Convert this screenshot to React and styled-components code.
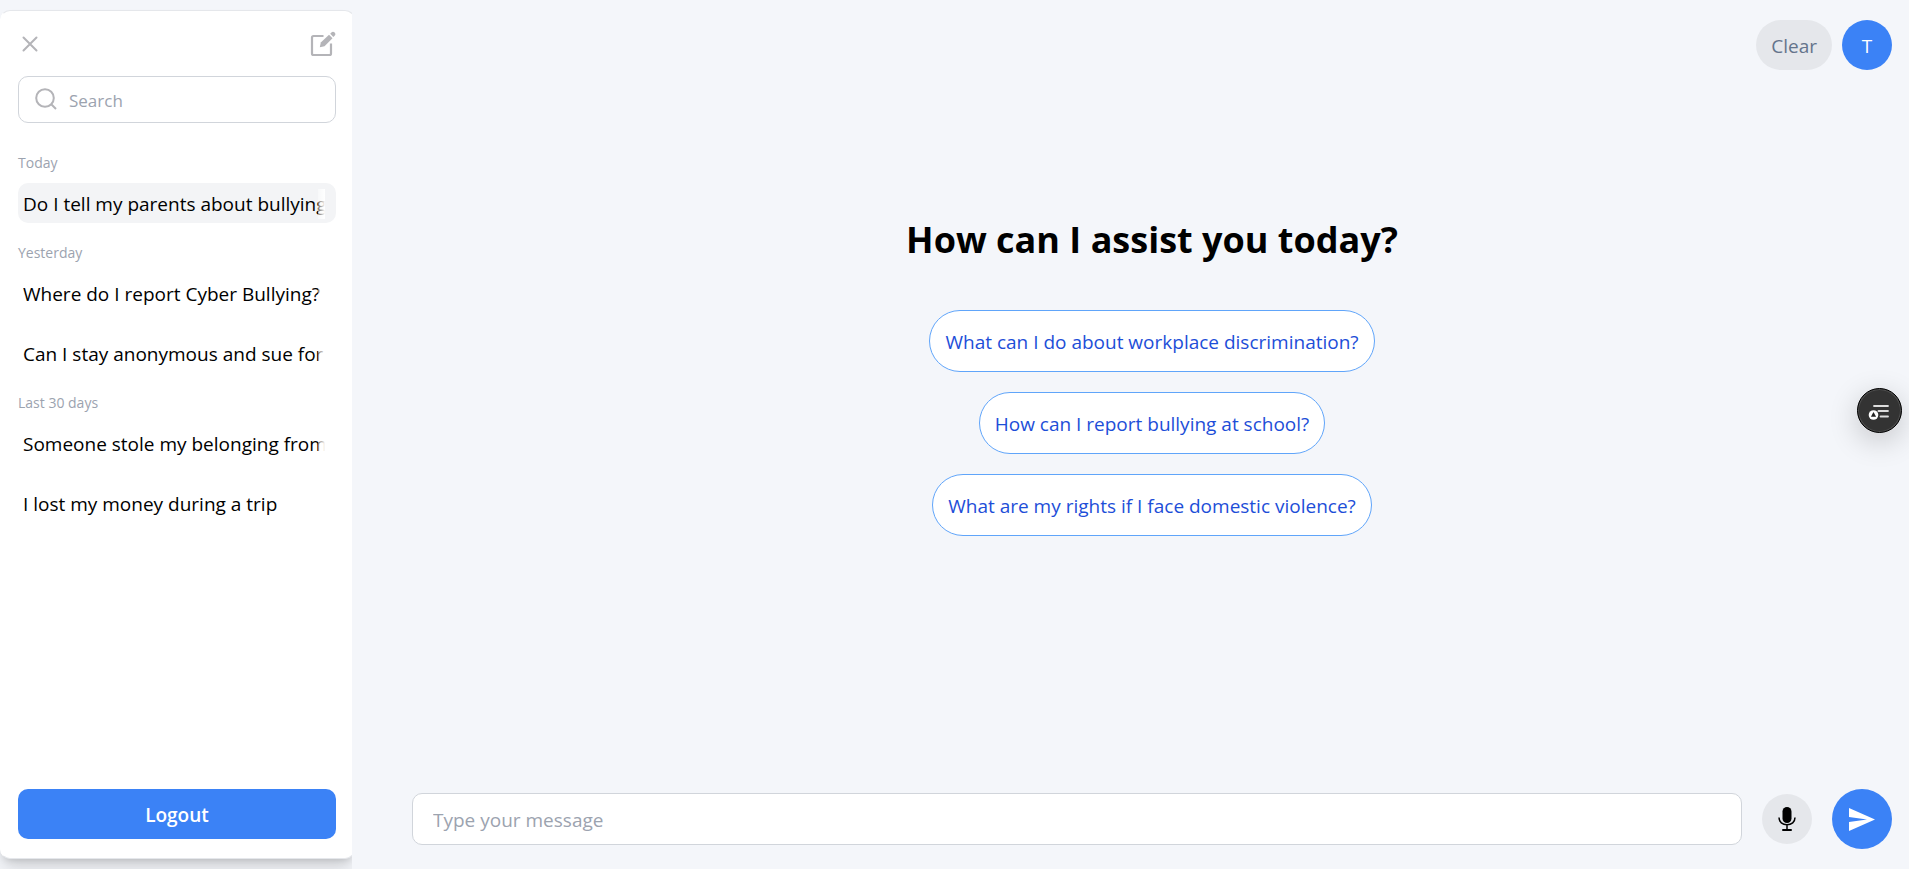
import React from "react";
import styled, { createGlobalStyle } from "styled-components";

const GlobalStyle = createGlobalStyle`
  *, *::before, *::after {
    box-sizing: border-box;
  }
  body {
    margin: 0;
    background-color: #f4f6fa;
    color: #000;
    font-family: "Open Sans", "Noto Sans", sans-serif;
    font-size: 19px;
    line-height: 30px;
  }
  button, input {
    font-family: inherit;
    font-size: inherit;
    line-height: inherit;
    color: inherit;
    margin: 0;
  }
  button {
    padding: 0;
    border: none;
    background: none;
    cursor: pointer;
    white-space: nowrap;
  }
  h1, h2, ul {
    margin: 0;
    padding: 0;
    list-style: none;
  }
`;

const Layout = styled.div`
  display: flex;
  height: 100vh;
  overflow: hidden;
`;

const SidebarArea = styled.div`
  flex: 0 0 352px;
  padding: 10px 0;
  overflow: hidden;
`;

const Sidebar = styled.aside`
  display: flex;
  flex-direction: column;
  width: 355px;
  height: 100%;
  padding: 20px 18px 19px 17px;
  background-color: #fff;
  border: 1px solid #e5e7eb;
  border-left-color: #fff;
  border-radius: 10px;
  box-shadow: 0 12px 18px -3px rgba(0, 0, 0, 0.14),
    0 5px 7px -4px rgba(0, 0, 0, 0.14);
`;

const SidebarTop = styled.div`
  display: flex;
  align-items: center;
  justify-content: space-between;
  height: 25px;
  padding-left: 4px;
`;

const IconButton = styled.button`
  display: flex;
  color: #b4b4b8;
`;

const SearchBox = styled.label`
  display: flex;
  align-items: center;
  gap: 12px;
  height: 47px;
  margin: 20px 0 30px;
  padding: 0 16px 2px;
  border: 1px solid #d1d5db;
  border-radius: 10px;
  color: #b4b4b8;
  input {
    flex: 1;
    min-width: 0;
    padding: 4px 0 0;
    border: none;
    outline: none;
    background: none;
    color: #000;
    font-size: 17px;
  }
  input::placeholder {
    color: #9ca3af;
    opacity: 1;
  }
`;

const History = styled.nav`
  flex: 1;
  display: flex;
  flex-direction: column;
  gap: 20px;
`;

const GroupTitle = styled.h2`
  margin-bottom: 10px;
  color: #9ca3af;
  font-size: 14px;
  font-weight: 400;
  line-height: 20px;
`;

const ChatList = styled.ul`
  display: flex;
  flex-direction: column;
  gap: 20px;
`;

const Chat = styled.button`
  display: block;
  width: 100%;
  height: 40px;
  padding: 6px 11px 4px 5px;
  border-radius: 10px;
  background-color: ${({ $active }) => ($active ? "#f3f4f6" : "transparent")};
  text-align: left;
  span {
    display: block;
    position: relative;
    overflow: hidden;
  }
  span::after {
    content: "";
    position: absolute;
    top: 0;
    right: 0;
    bottom: 0;
    width: 7px;
    background: linear-gradient(to left, #fff, rgba(255, 255, 255, 0.4));
  }
`;

const Logout = styled.button`
  height: 50px;
  padding-top: 2px;
  border-radius: 10px;
  background-color: #3b82f6;
  color: #fff;
  font-weight: 600;
`;

const Main = styled.main`
  flex: 1;
  min-width: 0;
  display: flex;
  flex-direction: column;
  padding: 20px 17px 20px 60px;
`;

const Header = styled.header`
  display: flex;
  justify-content: flex-end;
  gap: 10px;
`;

const Clear = styled.button`
  height: 50px;
  padding: 2px 15px 0;
  border-radius: 25px;
  background-color: #e5e7eb;
  color: #64748b;
`;

const Avatar = styled.button`
  width: 50px;
  height: 50px;
  padding-top: 2px;
  border-radius: 50%;
  background-color: #3b82f6;
  color: #fff;
`;

const Welcome = styled.section`
  flex: 1;
  display: flex;
  flex-direction: column;
  align-items: center;
  gap: 20px;
  padding-top: 145px;
`;

const Title = styled.h1`
  margin-bottom: 25px;
  font-size: 36px;
  font-weight: 700;
  line-height: 50px;
`;

const Suggestion = styled.button`
  height: 62px;
  padding: 2px 15px 0;
  border: 1px solid #60a5fa;
  border-radius: 31px;
  background-color: #fff;
  color: #1d4ed8;
`;

const Composer = styled.form`
  display: flex;
  align-items: center;
  gap: 20px;
`;

const MessageInput = styled.input`
  flex: 1;
  min-width: 0;
  height: 52px;
  padding: 2px 20px 0;
  border: 1px solid #d1d5db;
  border-radius: 10px;
  background-color: #fff;
  outline: none;
  &::placeholder {
    color: #9ca3af;
    opacity: 1;
  }
`;

const RoundButton = styled.button`
  display: flex;
  align-items: center;
  justify-content: center;
  width: ${({ $size }) => $size}px;
  height: ${({ $size }) => $size}px;
  border-radius: 50%;
  background-color: ${({ $primary }) => ($primary ? "#3b82f6" : "#e5e7eb")};
  color: ${({ $primary }) => ($primary ? "#fff" : "#000")};
`;

const FloatingButton = styled.button`
  position: fixed;
  right: 7px;
  top: 388px;
  display: flex;
  align-items: center;
  justify-content: center;
  width: 45px;
  height: 45px;
  border: 1px solid #000;
  border-radius: 50%;
  background-color: #333;
  box-shadow: inset 0 0 0 1px #505050, 0 8px 30px rgba(0, 0, 0, 0.2);
`;

const CloseIcon = () => (
  <svg width="16" height="16" viewBox="0 0 16 16" fill="none" stroke="currentColor" strokeWidth="2" strokeLinecap="round">
    <path d="M1.5 1.5l13 13M14.5 1.5l-13 13" />
  </svg>
);

const EditIcon = () => (
  <svg width="26" height="26" viewBox="0 0 26 26" fill="currentColor">
    <path d="M13.5 5H3.5A1.5 1.5 0 0 0 2 6.5V22.5A1.5 1.5 0 0 0 3.5 24H19.5A1.5 1.5 0 0 0 21 22.5V12.5" fill="none" stroke="currentColor" strokeWidth="2.2" />
    <path d="M9.8 16.2l1-4.7 8.2-7.7 3.500 3.500-8 8z" />
    <path d="M20.200 2.800l1.200-1.200a2.300 2.300 0 0 1 3.200 0 2.300 2.300 0 0 1 0 3.200l-1.200 1.200z" />
  </svg>
);

const SearchIcon = () => (
  <svg width="22" height="22" viewBox="0 0 22 22" fill="none" stroke="currentColor" strokeWidth="2">
    <circle cx="10" cy="10" r="8.8" />
    <path d="M16 16l5 5" />
  </svg>
);

const MicIcon = () => (
  <svg width="20" height="26" viewBox="0 0 20 26">
    <rect x="5.5" y="1" width="9" height="16" rx="4.5" fill="currentColor" />
    <path d="M2 11.5C2 16 5.5 18.8 10 18.8S18 16 18 11.5M10 19v5" fill="none" stroke="currentColor" strokeWidth="1.5" />
    <path d="M6 24h8" stroke="currentColor" strokeWidth="2" strokeLinecap="round" />
  </svg>
);

const SendIcon = () => (
  <svg width="26" height="23" viewBox="0 0 26 23" fill="currentColor">
    <path d="M0 0l26 11.5L0 23v-9l18-2.5L0 9z" />
  </svg>
);

const MenuIcon = () => (
  <svg width="24" height="18" viewBox="0 0 24 18">
    <path d="M6 4h14M10.5 9H20M12.500 14.500H20" stroke="#ddd" strokeWidth="1.800" strokeLinecap="round" />
    <circle cx="5.500" cy="13" r="4.800" fill="#fff" />
    <path d="M5.500 10l2.600 4.800H2.900z" fill="#222" />
  </svg>
);

const history = [
  { title: "Today", chats: ["Do I tell my parents about bullying"] },
  {
    title: "Yesterday",
    chats: [
      "Where do I report Cyber Bullying?",
      "Can I stay anonymous and sue for",
    ],
  },
  {
    title: "Last 30 days",
    chats: [
      "Someone stole my belonging from",
      "I lost my money during a trip",
    ],
  },
];

const suggestions = [
  "What can I do about workplace discrimination?",
  "How can I report bullying at school?",
  "What are my rights if I face domestic violence?",
];

const App = () => {
  return (
    <>
      <GlobalStyle />
      <Layout>
        <SidebarArea>
          <Sidebar>
            <SidebarTop>
              <IconButton aria-label='Close sidebar'>
                <CloseIcon />
              </IconButton>
              <IconButton aria-label='New chat'>
                <EditIcon />
              </IconButton>
            </SidebarTop>
            <SearchBox>
              <SearchIcon />
              <input type='text' placeholder='Search' aria-label='Search' />
            </SearchBox>
            <History>
              {history.map(({ title, chats }) => (
                <section key={title}>
                  <GroupTitle>{title}</GroupTitle>
                  <ChatList>
                    {chats.map((chat) => (
                      <li key={chat}>
                        <Chat $active={title === "Today"}>
                          <span>{chat}</span>
                        </Chat>
                      </li>
                    ))}
                  </ChatList>
                </section>
              ))}
            </History>
            <Logout>Logout</Logout>
          </Sidebar>
        </SidebarArea>
        <Main>
          <Header>
            <Clear>Clear</Clear>
            <Avatar>T</Avatar>
          </Header>
          <Welcome>
            <Title>How can I assist you today?</Title>
            {suggestions.map((text) => (
              <Suggestion key={text}>{text}</Suggestion>
            ))}
          </Welcome>
          <Composer onSubmit={(e) => e.preventDefault()}>
            <MessageInput
              type='text'
              placeholder='Type your message'
              aria-label='Message'
            />
            <RoundButton type='button' $size={50} aria-label='Record'>
              <MicIcon />
            </RoundButton>
            <RoundButton type='submit' $size={60} $primary aria-label='Send'>
              <SendIcon />
            </RoundButton>
          </Composer>
        </Main>
      </Layout>
      <FloatingButton aria-label='Open menu'>
        <MenuIcon />
      </FloatingButton>
    </>
  );
};

export default App;
